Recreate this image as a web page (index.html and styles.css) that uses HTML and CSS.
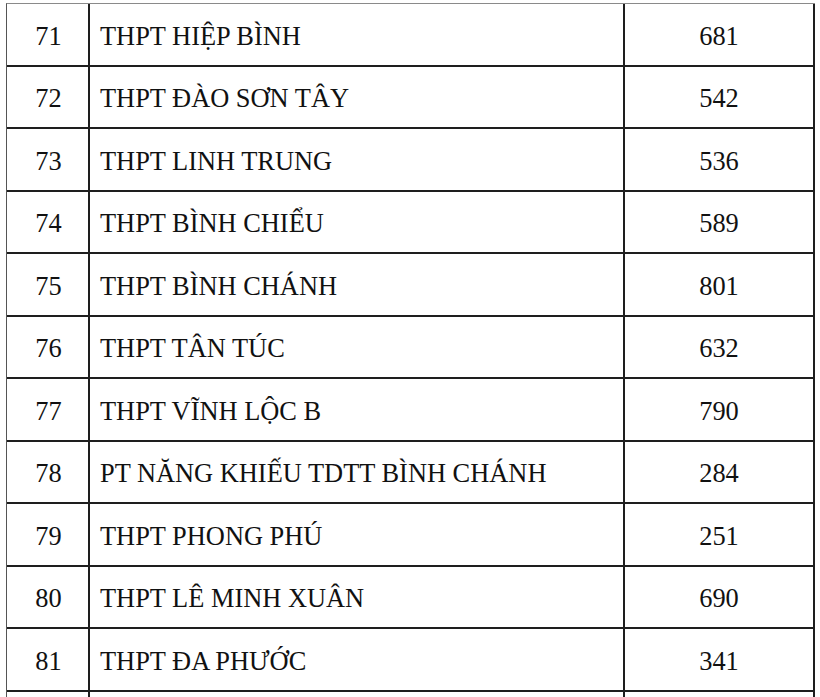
FILE: index.html
```html
<!DOCTYPE html>
<html lang="vi">
<head>
<meta charset="utf-8">
<title>Danh sách trường</title>
<link rel="stylesheet" href="styles.css">
</head>
<body>
<div class="sheet">
  <div class="row"><div class="c num">71</div><div class="c name">THPT HIỆP BÌNH</div><div class="c val">681</div></div>
  <div class="row"><div class="c num">72</div><div class="c name">THPT ĐÀO SƠN TÂY</div><div class="c val">542</div></div>
  <div class="row"><div class="c num">73</div><div class="c name">THPT LINH TRUNG</div><div class="c val">536</div></div>
  <div class="row"><div class="c num">74</div><div class="c name">THPT BÌNH CHIỂU</div><div class="c val">589</div></div>
  <div class="row"><div class="c num">75</div><div class="c name">THPT BÌNH CHÁNH</div><div class="c val">801</div></div>
  <div class="row"><div class="c num">76</div><div class="c name">THPT TÂN TÚC</div><div class="c val">632</div></div>
  <div class="row"><div class="c num">77</div><div class="c name">THPT VĨNH LỘC B</div><div class="c val">790</div></div>
  <div class="row"><div class="c num">78</div><div class="c name">PT NĂNG KHIẾU TDTT BÌNH CHÁNH</div><div class="c val">284</div></div>
  <div class="row"><div class="c num">79</div><div class="c name">THPT PHONG PHÚ</div><div class="c val">251</div></div>
  <div class="row"><div class="c num">80</div><div class="c name">THPT LÊ MINH XUÂN</div><div class="c val">690</div></div>
  <div class="row"><div class="c num">81</div><div class="c name">THPT ĐA PHƯỚC</div><div class="c val">341</div></div>
  <div class="row stub"><div class="c"></div><div class="c"></div><div class="c"></div></div>
</div>
</body>
</html>
```
FILE: styles.css
```css
html, body {
  margin: 0;
  padding: 0;
  background: #ffffff;
}
body {
  height: 697px;
  overflow: hidden;
}
.sheet {
  margin: 3px 0 0 6px;
  width: 808px;
  border-top: 1px solid #8a8a8a;
  border-left: 1px solid #555555;
  font-family: "Liberation Serif", "Times New Roman", serif;
  font-size: 26.4px;
  color: #111111;
}
.row {
  display: grid;
  grid-template-columns: 83px 535px 190px;
  height: 62.5px;
}
.c {
  display: flex;
  align-items: center;
  border-right: 2px solid #1e1e1e;
  border-bottom: 2px solid #1e1e1e;
  padding-top: 4px;
  white-space: nowrap;
}
.num {
  justify-content: center;
  padding-left: 2px;
}
.name {
  padding-left: 10px;
}
.val {
  justify-content: center;
}
.row.stub {
  height: 5px;
}
.stub .c {
  border-bottom: 0;
  padding-top: 0;
}
```
